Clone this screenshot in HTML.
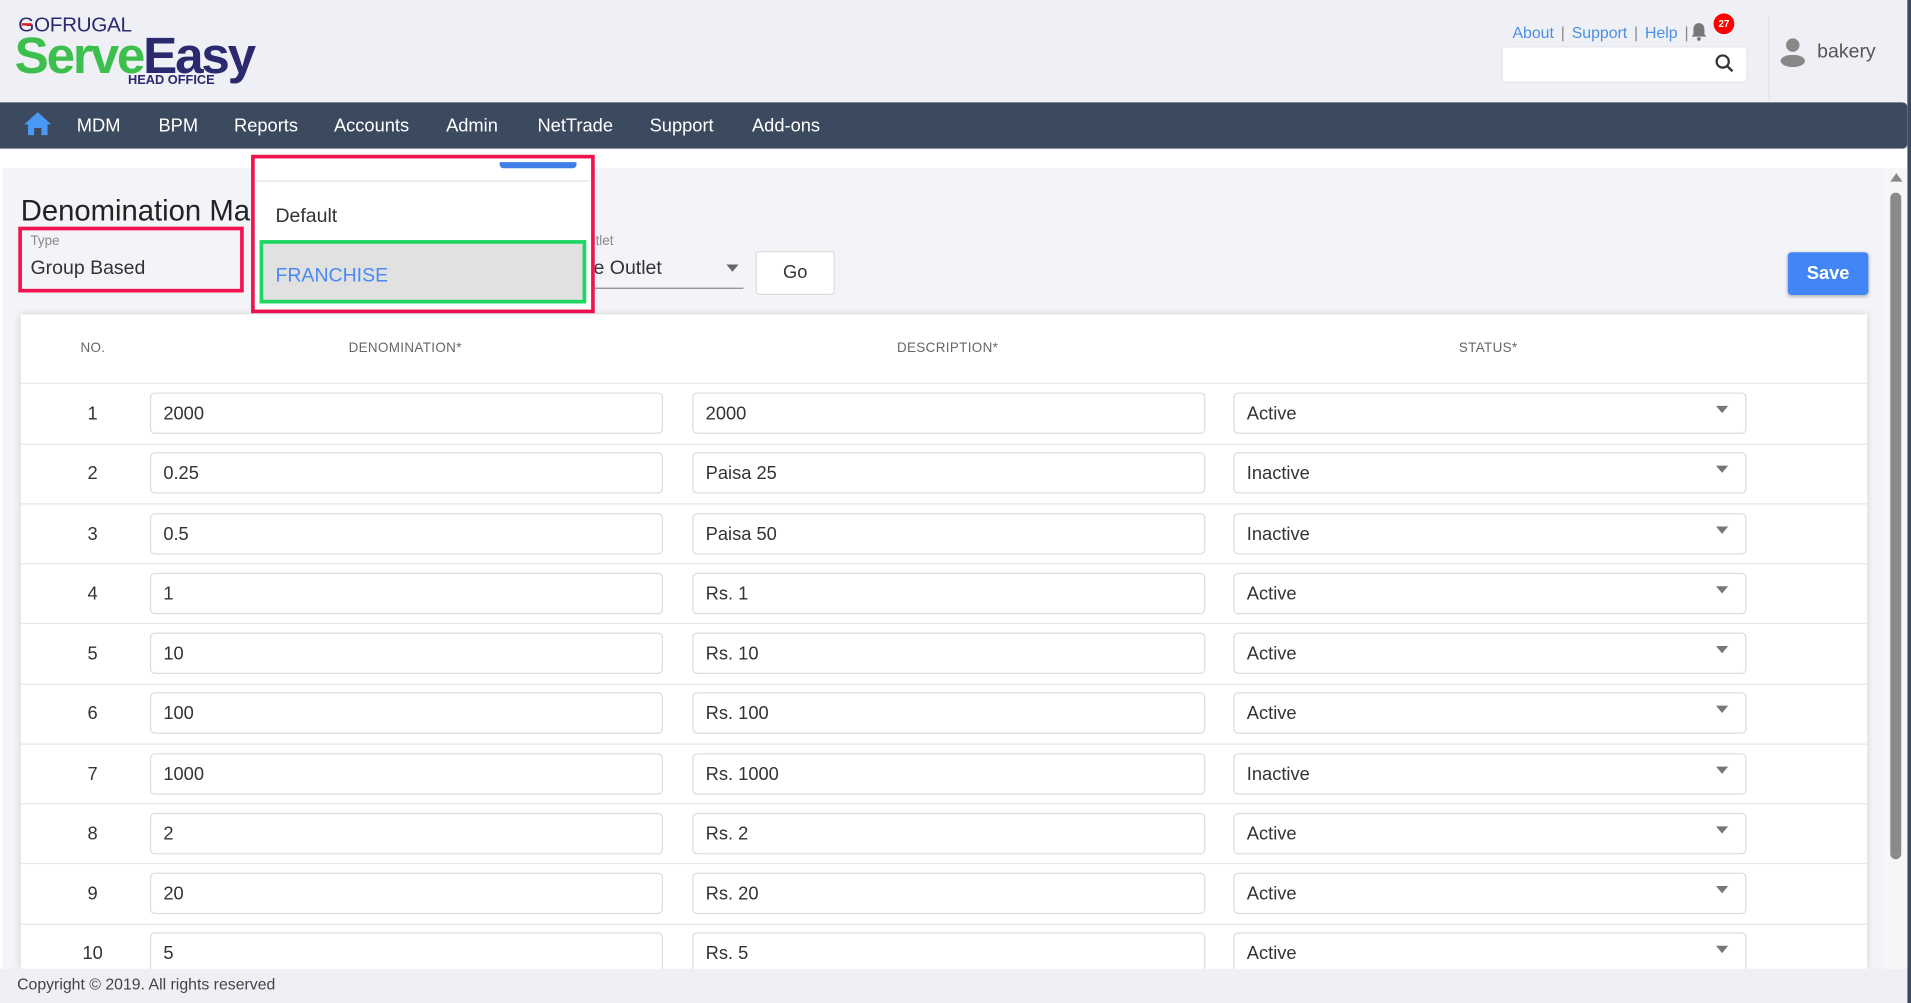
<!DOCTYPE html>
<html><head><meta charset="utf-8">
<style>
*{margin:0;padding:0;box-sizing:border-box}
html,body{width:1911px;height:1003px;overflow:hidden;background:#3c4a5f;font-family:"Liberation Sans",Arial,sans-serif}
#w{position:absolute;left:0;top:0;width:1568px;height:823px;transform:scale(1.21875);transform-origin:0 0;background:#eff0f5;overflow:hidden;border-right:3px solid #3c4a5f}
.a{position:absolute}
.nav{left:0;top:84px;width:1565px;height:38px;background:#3c4a5f;border-radius:0 4px 4px 0}
.nav span{position:absolute;top:11px;color:#fff;font-size:15px}
.inp{position:absolute;height:34px;border:1px solid #dcdcdc;border-radius:4px;background:#fff;font-size:15px;color:#333;padding:8px 10px}
.arr{position:absolute;right:14px;top:10px;width:0;height:0;border-left:5px solid transparent;border-right:5px solid transparent;border-top:6px solid #777}
.num{position:absolute;width:40px;text-align:center;font-size:15px;color:#333;left:56px}
.hl{position:absolute;left:17px;width:1515px;height:1px;background:#e6e6e6}
.th{position:absolute;top:280px;font-size:11px;color:#666;letter-spacing:.3px}
</style></head><body>
<div id="w">
 <div class="a" style="left:15px;top:11px;font-size:17px;color:#2b2a6e;letter-spacing:-0.3px">GOFRUGAL</div>
 <div class="a" style="left:18px;top:19px;width:8px;height:2px;background:#e01e25"></div>
 <div class="a" style="left:12px;top:23px;font-size:42px;font-weight:bold;letter-spacing:-1.8px;line-height:46px"><span style="color:#3dbf4e">Serve</span><span style="color:#2b2a6e">Easy</span></div>
 <div class="a" style="left:105px;top:60px;font-size:10.5px;font-weight:bold;color:#2b2a6e">HEAD OFFICE</div>
 <div class="a" style="left:1241px;top:19px;font-size:13px;color:#4a90e2;word-spacing:2px">About <span style="color:#888">|</span> Support <span style="color:#888">|</span> Help <span style="color:#888">|</span></div>
 <svg class="a" style="left:1387px;top:18px" width="14" height="16" viewBox="0 0 14 16"><path d="M7 1c-3 0-4.5 2.3-4.5 5v4L1 12h12l-1.5-2V6C11.5 3.3 10 1 7 1z" fill="#777"/><circle cx="7" cy="14" r="1.5" fill="#777"/></svg>
 <div class="a" style="left:1406px;top:11px;width:17px;height:17px;border-radius:50%;background:#f00;color:#fff;font-size:8px;font-weight:bold;text-align:center;line-height:17px">27</div>
 <div class="a" style="left:1232px;top:38px;width:202px;height:30px;background:#fff;border:1px solid #e4e4ea;border-radius:3px"></div>
 <svg class="a" style="left:1407px;top:44px" width="16" height="16" viewBox="0 0 16 16"><circle cx="6.5" cy="6.5" r="5" fill="none" stroke="#333" stroke-width="1.8"/><path d="M10 10l4.5 4.5" stroke="#333" stroke-width="2"/></svg>
 <div class="a" style="left:1451px;top:13px;width:1px;height:70px;background:#e0e0e6"></div>
 <svg class="a" style="left:1460px;top:30px" width="22" height="26" viewBox="0 0 22 26"><circle cx="11" cy="7" r="5.5" fill="#888"/><ellipse cx="11" cy="20" rx="10" ry="5" fill="#888"/></svg>
 <div class="a" style="left:1491px;top:34px;font-size:16px;color:#555">bakery</div>
 <div class="a nav">
  <svg style="position:absolute;left:20px;top:8px" width="22" height="19" viewBox="0 0 22 19"><path d="M11 0L0 10h3v9h5v-6h6v6h5v-9h3z" fill="#4a9af5"/></svg>
  <span style="left:63px">MDM</span><span style="left:130px">BPM</span><span style="left:192px">Reports</span><span style="left:274px">Accounts</span><span style="left:366px">Admin</span><span style="left:441px">NetTrade</span><span style="left:533px">Support</span><span style="left:617px">Add-ons</span>
 </div>
 <div class="a" style="left:0;top:122px;width:1565px;height:673px;background:#fff"></div>
 <div class="a" style="left:2px;top:138px;width:1543px;height:657px;background:#f3f4f7"></div>
 <div class="a" style="left:1545px;top:138px;width:20px;height:657px;background:#f6f6f6"></div>
 <div class="a" style="left:1551px;top:142px;width:0;height:0;border-left:5px solid transparent;border-right:5px solid transparent;border-bottom:7px solid #888"></div>
 <div class="a" style="left:1551px;top:158px;width:9px;height:547px;background:#8a8a8a;border-radius:5px"></div>
 <div class="a" style="left:17px;top:160px;font-size:24px;color:#222">Denomination Ma</div>
 <div class="a" style="left:15px;top:186px;width:185px;height:54px;border:3px solid #f0134f;background:#f3f4f7"></div>
 <div class="a" style="left:25px;top:192px;font-size:11px;color:#888">Type</div>
 <div class="a" style="left:25px;top:212px;font-size:16px;color:#333">Group Based</div>
 <div class="a" style="left:474px;top:192px;font-size:11px;color:#888">Outlet</div>
 <div class="a" style="left:479px;top:212px;font-size:16px;color:#333">se Outlet</div>
 <div class="a" style="left:596px;top:217px;width:0;height:0;border-left:5px solid transparent;border-right:5px solid transparent;border-top:6px solid #666"></div>
 <div class="a" style="left:470px;top:236px;width:140px;height:1px;background:#888"></div>
 <div class="a" style="left:620px;top:206px;width:65px;height:36px;background:#fff;border:1px solid #ddd;border-radius:3px;font-size:15px;text-align:center;line-height:34px;color:#333">Go</div>
 <div class="a" style="left:1467px;top:207px;width:66px;height:35px;background:#4285f4;border-radius:3px;font-size:15px;font-weight:bold;color:#fff;text-align:center;line-height:35px;box-shadow:0 1px 3px rgba(0,0,0,.3)">Save</div>
 <div class="a" style="left:206px;top:127px;width:282px;height:130px;border:3px solid #f0134f;background:#fff"></div>
 <div class="a" style="left:410px;top:133px;width:63px;height:5px;background:#3f7de8;border-radius:0 0 3px 3px"></div>
 <div class="a" style="left:209px;top:148px;width:275px;height:1px;background:#e3e3e3"></div>
 <div class="a" style="left:226px;top:169px;font-size:16px;color:#333">Default</div>
 <div class="a" style="left:213px;top:197px;width:268px;height:52px;border:3px solid #1ed760;background:#e1e1e1"></div>
 <div class="a" style="left:226px;top:218px;font-size:16px;color:#4a8af4">FRANCHISE</div>
 <div class="a" style="left:17px;top:258px;width:1515px;height:537px;background:#fff;box-shadow:0 0 6px rgba(0,0,0,.15)"></div>
 <div class="th" style="left:66px">NO.</div>
 <div class="th" style="left:286px">DENOMINATION*</div>
 <div class="th" style="left:736px">DESCRIPTION*</div>
 <div class="th" style="left:1197px">STATUS*</div>
 <div class="hl" style="top:314px"></div>
 <div id="rows"></div>
 <div class="a" style="left:0;top:795px;width:1565px;height:28px;background:#eff0f5;font-size:13px;color:#444;padding:5px 14px">Copyright © 2019. All rights reserved</div>
</div>
<script>
var d=[["2000","2000","Active"],["0.25","Paisa 25","Inactive"],["0.5","Paisa 50","Inactive"],["1","Rs. 1","Active"],["10","Rs. 10","Active"],["100","Rs. 100","Active"],["1000","Rs. 1000","Inactive"],["2","Rs. 2","Active"],["20","Rs. 20","Active"],["5","Rs. 5","Active"]];
var h="";
d.forEach(function(r,i){var c=339+49.25*i,t=c-17;
h+='<div class="num" style="top:'+(c-8)+'px">'+(i+1)+'</div>';
h+='<div class="inp" style="left:123px;top:'+t+'px;width:421px">'+r[0]+'</div>';
h+='<div class="inp" style="left:568px;top:'+t+'px;width:421px">'+r[1]+'</div>';
h+='<div class="inp" style="left:1012px;top:'+t+'px;width:421px">'+r[2]+'<div class="arr"></div></div>';
if(i<9)h+='<div class="hl" style="top:'+(c+24.5)+'px"></div>';});
document.getElementById("rows").outerHTML=h;
</script>
</body></html>
